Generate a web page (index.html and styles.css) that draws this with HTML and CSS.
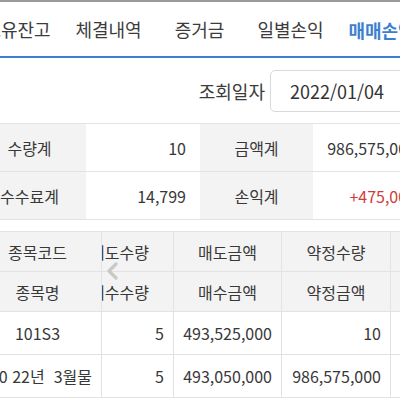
FILE: index.html
```html
<!DOCTYPE html>
<html lang="ko">
<head>
<meta charset="utf-8">
<link rel="stylesheet" href="styles.css">
</head>
<body>
<div class="topline"></div>
<nav class="tabs">
  <div class="tab">보유잔고</div>
  <div class="tab">체결내역</div>
  <div class="tab">증거금</div>
  <div class="tab">일별손익</div>
  <div class="tab active">매매손익</div>
</nav>
<div class="query">
  <span class="query-label">조회일자</span>
  <div class="date-box">2022/01/04</div>
</div>
<div class="summary">
  <div class="s-row">
    <div class="s-label">수량계</div>
    <div class="s-value">10</div>
    <div class="s-label">금액계</div>
    <div class="s-value">986,575,000</div>
  </div>
  <div class="s-row">
    <div class="s-label">수수료계</div>
    <div class="s-value">14,799</div>
    <div class="s-label">손익계</div>
    <div class="s-value red">+475,000</div>
  </div>
</div>
<div class="grid-wrap">
  <div class="grid">
    <div class="g-row head">
      <div class="c c1">종목코드</div>
      <div class="c c2"><span>매도수량</span></div>
      <div class="c c3">매도금액</div>
      <div class="c c4">약정수량</div>
      <div class="c c5"></div>
    </div>
    <div class="g-row head">
      <div class="c c1">종목명</div>
      <div class="c c2"><span>매수수량</span></div>
      <div class="c c3">매수금액</div>
      <div class="c c4">약정금액</div>
      <div class="c c5"></div>
    </div>
    <div class="g-row body">
      <div class="c c1">101S3</div>
      <div class="c c2 num">5</div>
      <div class="c c3 num">493,525,000</div>
      <div class="c c4 num">10</div>
      <div class="c c5"></div>
    </div>
    <div class="g-row body">
      <div class="c c1 name">코스피200 22년&nbsp;&nbsp;3월물</div>
      <div class="c c2 num">5</div>
      <div class="c c3 num">493,050,000</div>
      <div class="c c4 num">986,575,000</div>
      <div class="c c5"></div>
    </div>
  </div>
  <svg class="chevron" width="12" height="18" viewBox="0 0 12 18"><path d="M10 2 L3 9 L10 16" fill="none" stroke="#c9c9c9" stroke-width="3.2" stroke-linecap="round" stroke-linejoin="round"/></svg>
</div>
</body>
</html>
```
FILE: styles.css
```css
* { box-sizing: border-box; }
html, body {
  margin: 0;
  width: 400px;
  height: 400px;
  overflow: hidden;
  background: #fff;
  font-family: "Noto Sans CJK KR", "Noto Sans", sans-serif;
  color: #383838;
}
.topline {
  height: 2px;
  background: #9a9a9a;
}
.tabs {
  display: flex;
  height: 56px;
  margin-left: -28px;
  border-bottom: 2px solid #3d7fcf;
}
.tab {
  flex: 0 0 91px;
  display: flex;
  align-items: center;
  justify-content: center;
  font-size: 18px;
  color: #3c3c3c;
  white-space: nowrap;
}
.tab.active {
  color: #3d7fcf;
  font-weight: 700;
  border-bottom: 2px solid #3d7fcf;
  margin-bottom: -2px;
  padding-top: 2px;
}
.query {
  display: flex;
  justify-content: flex-end;
  align-items: center;
  gap: 5px;
  height: 65px;
  margin-right: -30px;
}
.query-label {
  font-size: 18px;
  color: #3c3c3c;
}
.date-box {
  width: 160px;
  height: 42px;
  border: 1px solid #d9d9d9;
  border-radius: 5px;
  display: flex;
  align-items: center;
  padding-left: 19px;
  font-size: 18px;
  color: #333;
}
.summary {
  margin-left: -27px;
  width: 460px;
  border-top: 1px solid #e2e2e2;
}
.s-row {
  display: grid;
  grid-template-columns: 113px 114px 113px 117px;
  height: 48px;
  border-bottom: 1px solid #e2e2e2;
}
.s-label {
  background: #f3f3f3;
  display: flex;
  align-items: center;
  justify-content: center;
  font-size: 16px;
}
.s-value {
  display: flex;
  align-items: center;
  justify-content: flex-end;
  padding-right: 14px;
  font-size: 16px;
  white-space: nowrap;
}
.red { color: #d23b3b; }
.grid-wrap {
  position: relative;
  margin-top: 11px;
}
.grid {
  margin-left: -26px;
  width: 440px;
  border-top: 1px solid #e2e2e2;
}
.g-row {
  display: grid;
  grid-template-columns: 128px 72px 108px 109px 23px;
  border-bottom: 1px solid #e2e2e2;
}
.g-row.head { height: 40px; background: #f3f3f3; }
.g-row.body { height: 43px; }
.c {
  display: flex;
  align-items: center;
  justify-content: center;
  font-size: 16px;
  white-space: nowrap;
  overflow: hidden;
  border-right: 1px solid #e2e2e2;
}
.c5 { border-right: none; }
.c2 {
  justify-content: flex-end;
  padding-right: 24px;
}
.num {
  justify-content: flex-end;
  padding-right: 9px;
}
.c1.name {
  justify-content: flex-end;
  padding-right: 9px;
}
.chevron {
  position: absolute;
  left: 106px;
  top: 31px;
}
```
